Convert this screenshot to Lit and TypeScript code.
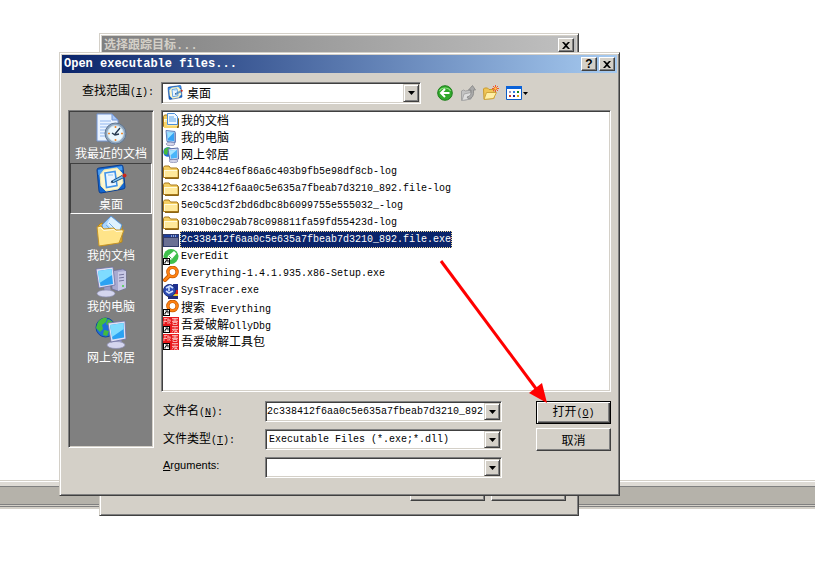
import { LitElement, html, svg, css, nothing } from "lit";
import { customElement, state } from "lit/decorators.js";

/* Splits a string so that Han runs get the 12px face and the rest the 10px monospace one. */
const mix = (text: string) =>
  text
    .split(/([\u4e00-\u9fff]+)/)
    .filter(Boolean)
    .map((run) => (/[\u4e00-\u9fff]/.test(run) ? html`<span class="han">${run}</span>` : run));

const shortcut = svg`<path d="M0 9h7v7h-7z" fill="#000"/><path d="M1 10h5v5h-5z" fill="#fff"/><path d="M2 14.500V13l2-1.500M2.500 11h2.500v2.500" fill="none" stroke="#000"/>`;

const monitor = svg`
  <path d="M17 5l11-2 3 2v17l-8 3-6-2z" fill="#a9aad0" stroke="#6c6c9c" stroke-width=".7"/>
  <path d="M23 6l8-1v17l-8 3z" fill="#c9c9e6"/>
  <path d="M24 9l5-.7M24 12l5-.7M24 15l5-.7" stroke="#77779f"/>
  <circle cx="28" cy="20" r="1" fill="#46d046"/>
  <path d="M9 21l6-1 1 6-6 1z" fill="#9a9cc8"/>
  <ellipse cx="11" cy="27.500" rx="9" ry="3.500" fill="#d4d5ee" stroke="#8d8fb5" stroke-width=".7"/>
  <path d="M1 3l17-2 2 18-16 3z" fill="#dfe0f4" stroke="#6d70a2" stroke-width=".8"/>
  <path d="M3 5l13.500-2 1.500 15-12.500 2z" fill="#2ba2f3"/>
  <path d="M3 5l13.500-2 .6 6-12.600 8z" fill="#7fdcff"/>`;

const folder = svg`
  <path d="M.5 3.500l1-1.500h4.500l1.500 2h6.500l1 1v8.500h-14.500z" fill="#f4cf63" stroke="#a8791b"/>
  <path d="M1 6h13.500v7h-13.500z" fill="#ffe99b"/>
  <path d="M1 6.500h13M1.500 6v7" stroke="#fffbdc"/>
  <path d="M2 14.500h13.500v-9" fill="none" stroke="#8a6415"/>`;

const deskPad = svg`
  <path d="M2 6q0-2 2-2l22-3q2 0 2 2l2 20q0 2-2 2l-22 4q-2 0-2-2z" fill="#1467cf" stroke="#0b3f92"/>
  <path d="M3 6l24-4 .4 4-24 5z" fill="#4b9ff3"/>
  <path d="M9 6l13-2 5 5 1 10-5 6-12 2-5-5-1-11z" fill="#fdf7d0" stroke="#f3e6a8"/>
  <path d="M10 9l10-1.500 2 14-10.500 2z" fill="#eaf5ff" stroke="#3f93ea" stroke-width="1.600"/>
  <path d="M13 11h5M20 14l.500 4-4 1" fill="none" stroke="#8fc8f6"/>
  <path d="M16 17.500l11-6 2 2-10.500 5z" fill="#7cc0f0" stroke="#174a80" stroke-width=".9"/>
  <path d="M15.500 18.500l2-1.500 1 1.500z" fill="#0d2540"/>
  <circle cx="29.500" cy="11.500" r="2" fill="#c9281c"/>`;

const sealMarks = "M1 1.500h3M2 1.500v3M1 4.500h3M1 4v3M5 1v6M4.500 3h3M7 3v2M6 5l1.500 2";

const drawings: Record<string, { box: number; art: unknown }> = {
  recent: {
    box: 32,
    art: svg`
      <path d="M2 1h15l6 6v21h-21z" fill="#eaf3ff" stroke="#7396d6"/>
      <path d="M17 1v6h6z" fill="#a9c8f6" stroke="#7396d6"/>
      <path d="M5 8h11M5 11h13M5 14h9M5 17h7M5 20h6M5 23h6" stroke="#91b7ee"/>
      <circle cx="20.500" cy="20.500" r="10.500" fill="#8fa5bd" stroke="#5f7690"/>
      <circle cx="20.500" cy="20.500" r="8" fill="#e9f7fd" stroke="#c5dbe9"/>
      <path d="M20.500 13v2M20.500 26v2M13 20.500h2M26 20.500h2" stroke="#f08a32" stroke-width="1.600"/>
      <path d="M25 15l-5 6M17 20l3 2 4-1" fill="none" stroke="#24384e" stroke-width="1.400"/>`,
  },
  desktop: { box: 32, art: deskPad },
  documents: {
    box: 32,
    art: svg`
      <path d="M3 11l3-3 6 2 2 2 13-2v17l-21 4z" fill="#e8b73a" stroke="#b58418"/>
      <path d="M7 10l9-9 11 9-5 14-12 2z" fill="#a9d5fb" stroke="#5d94d2"/>
      <path d="M16 2l10 8-3 9-11-10z" fill="#dff2ff"/>
      <path d="M11 10l7 7M14 8l7 7" stroke="#72ade6"/>
      <path d="M2 12l4-1 3 3 10-1 2 2h8l-5 13-20 3z" fill="#ffe489" stroke="#c4942a"/>
      <path d="M3.500 13l2-.500 3 3 10.500-1 2 2 6-.500" fill="none" stroke="#fffbe0"/>`,
  },
  computer: { box: 32, art: monitor },
  network: {
    box: 32,
    art: svg`
      <circle cx="10.500" cy="10.500" r="9.500" fill="#1f6ed8" stroke="#124a9d"/>
      <path d="M3 5q4-5 9-4l-1 4-4 3 1 4-3 3-4-4zM13 2l5 3-4 4-3-2zM9 13l5 1-2 5-4-1z" fill="#45bb3c"/>
      <g transform="translate(12 3)">
        <path d="M8 19l6-1 1 6-6 1z" fill="#9a9cc8"/>
        <ellipse cx="9" cy="25" rx="9" ry="3.500" fill="#d4d5ee" stroke="#8d8fb5" stroke-width=".7"/>
        <path d="M1 3l17-2 1 18-15 3z" fill="#dfe0f4" stroke="#6d70a2" stroke-width=".8"/>
        <path d="M3 5l13.500-2 .6 14.500-11.600 2z" fill="#2ba2f3"/>
        <path d="M3 5l13.500-2 .2 6-11.700 8z" fill="#7fdcff"/>
      </g>`,
  },
  folder: { box: 16, art: folder },
  docs16: {
    box: 16,
    art: svg`${folder}
      <path d="M4.500 .5h7l3 3v8h-10z" fill="#f2f9ff" stroke="#4d8fd8"/>
      <path d="M6 4h5M6 6h7M6 8h7" stroke="#58a5ec"/>
      <path d="M1 9h3v4h10v2h-13z" fill="#f8d66c"/>`,
  },
  pc16: {
    box: 16,
    art: svg`
      <path d="M3 .5l9 1v11l-8-1z" fill="#bcd9f8" stroke="#5b80bd"/>
      <path d="M4 2l7 .5v8.500l-6-.5z" fill="#35a3f5"/><path d="M4 2l7 .5-6 6z" fill="#9be2ff"/>
      <path d="M12 2l1 1v9l-1 1z" fill="#7a85b5"/>
      <ellipse cx="7.500" cy="14" rx="4.500" ry="1.700" fill="#d4d6ea" stroke="#8387ad" stroke-width=".7"/>`,
  },
  net16: {
    box: 16,
    art: svg`
      <circle cx="5" cy="5" r="4.800" fill="#1f6ed8"/><path d="M1 3q3-4 6-2l-2 3-1 4-3-1z" fill="#45bb3c"/>
      <path d="M5 2l10-1 .5 11-8.500 1z" fill="#dfe0f4" stroke="#5b6ea8"/>
      <path d="M6.500 3.500l7.500-.8 .4 8-6.400 1z" fill="#49b5fa"/><path d="M6.500 3.500l7.500-.8-7 6z" fill="#a5e4ff"/>
      <ellipse cx="10.500" cy="14" rx="4.500" ry="1.600" fill="#d4d6ea" stroke="#8387ad" stroke-width=".7"/>`,
  },
  exe: {
    box: 16,
    art: svg`<path d="M0 2h16v13h-16z" fill="#303a6a"/><path d="M1 6h14v8h-14z" fill="#6a7093"/>
      <path d="M1 3h14v2h-14z" fill="#1c3f9c"/><path d="M8 4h1M10 4h1M12 4h1" stroke="#fff"/>`,
  },
  everedit: {
    box: 16,
    art: svg`<circle cx="8" cy="7.500" r="7.500" fill="#3fc04c"/>
      <path d="M4 11l1-4 6-5 2.500 2.500-5 6z" fill="#fff"/><path d="M6 7l2.500 2.500" stroke="#3fc04c"/>${shortcut}`,
  },
  lens: {
    box: 16,
    art: svg`<path d="M6.500 9.500l-4.500 4.500" stroke="#c65a00" stroke-width="4" stroke-linecap="round"/>
      <circle cx="9.500" cy="6" r="4.600" fill="#fff" stroke="#c65a00" stroke-width="3.400"/>
      <circle cx="9.500" cy="6" r="4.600" fill="none" stroke="#ff8212" stroke-width="2"/>
      <path d="M6.500 9.500l-4.500 4.500" stroke="#ff8212" stroke-width="2.400" stroke-linecap="round"/>`,
  },
  lenscut: {
    box: 16,
    art: svg`<circle cx="9.500" cy="6" r="4.600" fill="#fff" stroke="#c65a00" stroke-width="3.400"/>
      <circle cx="9.500" cy="6" r="4.600" fill="none" stroke="#ff8212" stroke-width="2"/>${shortcut}`,
  },
  tracer: {
    box: 16,
    art: svg`<path d="M6 2h9v12h-9z" fill="#d8231f"/><path d="M10 1h5v6h-5z" fill="#1d2f8e"/>
      <path d="M4 11h11v3h-11z" fill="#f5c92c"/><path d="M5 13h10v3h-10z" fill="#222b78"/>
      <circle cx="6.500" cy="7.500" r="6" fill="#2c4bb3" stroke="#182d77"/>
      <path d="M3 5l4-2 3 2M3 8l3 2 4-2M6 4v4" fill="none" stroke="#cfe0ff" stroke-width="1.600"/>`,
  },
  seal: {
    box: 16,
    art: svg`<path d="M0 0h16v16h-16z" fill="#e8191c"/>
      <g fill="none" stroke="#ffc9c9" stroke-width=".8">
        <path d="${sealMarks}"/>
        <path d="M9 1.500h6M12 1v3M9.500 3h5M9 4.500h6M10 5.500h4v2h-4z"/>
        <path d="M9 9.500h6M10 10.500v1M12 10v2M14 10.500v1M9 12.500h6M11 12.500l-2 3M11 14h3l-3 1.500M12 14l3 1.500"/>
      </g>${shortcut}`,
  },
  back: {
    box: 16,
    art: svg`<circle cx="8" cy="8" r="7.300" fill="#2fa82b" stroke="#1d7f1b"/>
      <path d="M2.500 6a6 5 0 0 1 11 0" fill="none" stroke="#8be07f" stroke-width="1.200"/>
      <path d="M12.500 8h-8M8 4l-4 4 4 4" fill="none" stroke="#fff" stroke-width="2"/>`,
  },
  up: {
    box: 16,
    art: svg`<path d="M1.500 6l2-1 2 1 5-1v9l-9 1.500z" fill="#c3c3c3" stroke="#a2a2a2"/>
      <path d="M4 9l9-2-2 7-9 1.500z" fill="#dedede" stroke="#a8a8a8"/>
      <path d="M7 12q5-1 4-7h-2.500l4-4.500 3 4.500h-2q1 8-5 9z" fill="#a9a9a9" stroke="#858585" stroke-width=".8"/>`,
  },
  newdir: {
    box: 16,
    art: svg`<path d="M.5 4l1-1h3l1.500 1.500h5v9l-10 .5z" fill="#f0c556" stroke="#c89a2e"/>
      <path d="M3.500 7.500h10l-3 6-9.500 1z" fill="#ffefa5" stroke="#d0a53a"/>
      <path d="M12.500 0v7M9 3.500h7M10 1l5 5M15 1l-5 5" stroke="#f2562b"/><circle cx="12.500" cy="3.500" r="1.200" fill="#ffd24a"/>`,
  },
  views: {
    box: 16,
    art: svg`<path d="M.5 1.500h15v13h-15z" fill="#fff" stroke="#0a5bc8"/><path d="M0 1h16v3h-16z" fill="#0a62d8"/>
      <path d="M3 6h2v2h-2z" fill="#9c9cc4"/><path d="M7 6h2v2h-2z" fill="#2f7fe0"/><path d="M11 6h2v2h-2z" fill="#128a20"/>
      <path d="M3 10h2v2h-2z" fill="#d03a2a"/><path d="M7 10h2v2h-2z" fill="#15208c"/><path d="M11 10h2v2h-2z" fill="#d8a512"/>`,
  },
};

const icon = (name: string, cls = "i16") => {
  const d = drawings[name];
  return html`<svg class=${cls} viewBox="0 0 ${d.box} ${d.box}" aria-hidden="true">${d.art}</svg>`;
};

const arrowDown = html`<svg class="caret" viewBox="0 0 7 4" aria-hidden="true"><path d="M0 0h7l-3.500 4z" /></svg>`;
const cross = html`<svg class="glyph" viewBox="0 0 8 7" aria-hidden="true"><path d="M0 0h2l2 2 2-2h2l-3 3.500 3 3.500h-2l-2-2-2 2h-2l3-3.500z" /></svg>`;

const places = [
  ["recent", "我最近的文档"],
  ["desktop", "桌面"],
  ["documents", "我的文档"],
  ["computer", "我的电脑"],
  ["network", "网上邻居"],
];

const files = [
  ["docs16", "我的文档"],
  ["pc16", "我的电脑"],
  ["net16", "网上邻居"],
  ["folder", "0b244c84e6f86a6c403b9fb5e98df8cb-log"],
  ["folder", "2c338412f6aa0c5e635a7fbeab7d3210_892.file-log"],
  ["folder", "5e0c5cd3f2bd6dbc8b6099755e555032_-log"],
  ["folder", "0310b0c29ab78c098811fa59fd55423d-log"],
  ["exe", "2c338412f6aa0c5e635a7fbeab7d3210_892.file.exe"],
  ["everedit", "EverEdit"],
  ["lens", "Everything-1.4.1.935.x86-Setup.exe"],
  ["tracer", "SysTracer.exe"],
  ["lenscut", "搜索 Everything"],
  ["seal", "吾爱破解OllyDbg"],
  ["seal", "吾爱破解工具包"],
];

@customElement("app-root")
export class AppRoot extends LitElement {
  @state() private place = 1;
  @state() private chosen = 7;

  static styles = css`
    :host {
      display: block;
      position: relative;
      min-height: 100vh;
      overflow: hidden;
      background: #fff;
      color: #000;
      font: 10px/16px "Liberation Mono", "Noto Sans CJK SC", monospace;
    }
    * { box-sizing: border-box; }
    button, input, select {
      margin: 0;
      padding: 0;
      border: 0;
      border-radius: 0;
      background: none;
      color: inherit;
      font: inherit;
      appearance: none;
      outline: none;
    }
    .han {
      font-family: "Noto Sans CJK SC", sans-serif;
      font-size: 12px;
      line-height: 16px;
    }
    .i16 { width: 16px; height: 16px; flex: none; display: block; }
    .i32 { width: 32px; height: 32px; flex: none; display: block; }
    .caret { width: 7px; height: 4px; display: block; }
    .glyph { width: 8px; height: 7px; display: block; }

    .strip {
      position: absolute;
      top: 480px;
      left: 0;
      right: 0;
      border-top: 1px solid #d4d0c8;
      border-bottom: 2px solid #d4d0c8;
      padding-top: 1px;
    }
    .strip-light { height: 4px; background: #dedbd5; }
    .strip-bar { height: 19px; background: #b5b2aa; border-top: 1px solid #808080; border-bottom: 1px solid #808080; }
    .strip-line { height: 2px; background: #d4d0c8; border-bottom: 1px solid #808080; }

    .window {
      position: absolute;
      background: #d4d0c8;
      padding: 2px;
      border: 1px solid;
      border-color: #d4d0c8 #404040 #404040 #d4d0c8;
      box-shadow: inset 1px 1px #fff, inset -1px -1px #808080;
    }
    .rear { top: 33px; left: 99px; right: 236px; }
    .front { top: 52px; left: 59px; right: 195px; }
    .titlebar {
      display: flex;
      align-items: center;
      gap: 2px;
      height: 18px;
      padding: 0 2px;
      background: linear-gradient(to right, #0a246a, #a6caf0);
      color: #fff;
    }
    .rear .titlebar { background: linear-gradient(to right, #808080, #c0c0c0); color: #d4d0c8; }
    .titlebar h1 {
      flex: 1;
      margin: 0;
      font-size: 12px;
      line-height: 18px;
      font-weight: bold;
      white-space: nowrap;
    }
    .titlebar button { width: 16px; height: 14px; font: bold 12px/12px "Liberation Sans", sans-serif; color: #000; }
    .rear-body { display: flex; justify-content: flex-end; gap: 6px; padding: 424px 10px 12px; }

    .raised {
      display: flex;
      align-items: center;
      justify-content: center;
      background: #d4d0c8;
      border: 1px solid;
      border-color: #fff #404040 #404040 #fff;
      box-shadow: inset -1px -1px #808080;
    }
    .push { width: 75px; height: 23px; }
    .default { border-color: #000; box-shadow: inset 1px 1px #fff, inset -1px -1px #404040, inset -2px -2px #808080; }

    .body {
      display: grid;
      grid-template-columns: 86px 1fr;
      column-gap: 7px;
      padding: 9px 6px 15px;
    }
    .look-label { text-align: right; line-height: 18px; }
    .look { display: flex; align-items: flex-start; margin-bottom: 6px; }
    .look .combo { flex: 1; height: 22px; }
    .tools { display: flex; gap: 7px; width: 190px; padding: 3px 0 0 16px; }
    .tools button { display: flex; align-items: center; gap: 1px; }
    .tools .caret { width: 5px; height: 3px; }

    .sunken {
      background: #fff;
      border: 1px solid;
      border-color: #808080 #fff #fff #808080;
      box-shadow: inset 1px 1px #404040, inset -1px -1px #d4d0c8;
      padding: 1px;
    }
    .combo { display: flex; align-items: stretch; height: 21px; position: relative; min-width: 0; }
    .combo input, .combo select { flex: 1; min-width: 0; width: 100%; line-height: 16px; }
    .combo select { padding: 0 18px 0 2px; }
    .combo .i16 { margin: 1px 3px 0 4px; }
    .combo .big { font: 12px/18px "Noto Sans CJK SC", sans-serif; padding-left: 1px; }
    .drop {
      width: 16px;
      flex: none;
      border-color: #d4d0c8 #404040 #404040 #d4d0c8;
      box-shadow: inset 1px 1px #fff, inset -1px -1px #808080;
    }
    span.drop { position: absolute; top: 1px; bottom: 1px; right: 1px; pointer-events: none; }

    .places { grid-row: 2 / span 2; align-self: start; min-height: 338px; background: #808080; }
    .places button {
      display: flex;
      flex-direction: column;
      align-items: center;
      width: 100%;
      height: 51px;
      border: 1px solid transparent;
      color: #fff;
    }
    .places .current { border-color: #404040 #fff #fff #404040; }

    .list { margin: 0; min-height: 282px; list-style: none; }
    .list li { display: flex; gap: 1px; height: 17px; align-items: center; white-space: nowrap; }
    .name { padding: 0 1px; line-height: 17px; height: 17px; }
    .name .han { line-height: 15px; }
    .picked .name { background: #0a246a; color: #fff; outline: 1px dotted #f5db95; outline-offset: -1px; }

    .form { display: flex; gap: 34px; margin-top: 9px; }
    .fields { flex: 1; display: grid; grid-template-columns: 102px 1fr; row-gap: 7px; padding-left: 2px; align-items: center; }
    .plain { font: 11px/16px "Liberation Sans", sans-serif; align-self: start; }
    .actions { display: flex; flex-direction: column; gap: 4px; }

    .pointer { position: absolute; top: 205px; right: 70px; width: 112px; height: 146px; pointer-events: none; }
  `;

  render() {
    return html`
      <div class="strip">
        <div class="strip-light"></div>
        <div class="strip-bar"></div>
        <div class="strip-line"></div>
      </div>

      <section class="window rear">
        <header class="titlebar">
          <h1>${mix("选择跟踪目标...")}</h1>
          <button class="raised" aria-label="关闭">${cross}</button>
        </header>
        <div class="rear-body">
          <button class="raised push" aria-label="确定"></button>
          <button class="raised push" aria-label="取消"></button>
        </div>
      </section>

      <section class="window front" role="dialog" aria-labelledby="title">
        <header class="titlebar">
          <h1 id="title">Open executable files...</h1>
          <button class="raised">?</button>
          <button class="raised" aria-label="关闭">${cross}</button>
        </header>
        <div class="body">
          <label class="look-label" for="look">${mix("查找范围")}(<u>I</u>):</label>
          <div class="look">
            <div class="combo sunken">
              ${icon("desktop")}
              <select id="look" class="big"><option>桌面</option></select>
              <span class="raised drop">${arrowDown}</span>
            </div>
            <div class="tools">
              <button aria-label="后退">${icon("back")}</button>
              <button aria-label="向上">${icon("up")}</button>
              <button aria-label="新建文件夹">${icon("newdir")}</button>
              <button aria-label="查看">${icon("views")}${arrowDown}</button>
            </div>
          </div>

          <nav class="places sunken">
            ${places.map(
              ([art, name], i) => html`<button class=${i === this.place ? "current" : nothing} @click=${() => (this.place = i)}>
                ${icon(art, "i32")}${mix(name)}
              </button>`
            )}
          </nav>

          <ul class="list sunken" role="listbox" aria-label="文件">
            ${files.map(
              ([art, name], i) => html`<li
                role="option"
                aria-selected=${i === this.chosen}
                class=${i === this.chosen ? "picked" : nothing}
                @click=${() => (this.chosen = i)}
              >${icon(art)}<span class="name">${mix(name)}</span></li>`
            )}
          </ul>

          <div class="form">
            <div class="fields">
              <label for="file">${mix("文件名")}(<u>N</u>):</label>
              <div class="combo sunken">
                <input id="file" value="2c338412f6aa0c5e635a7fbeab7d3210_892" />
                <button class="raised drop" aria-label="文件名列表">${arrowDown}</button>
              </div>
              <label for="type">${mix("文件类型")}(<u>T</u>):</label>
              <div class="combo sunken">
                <select id="type"><option>Executable Files (*.exe;*.dll)</option></select>
                <span class="raised drop">${arrowDown}</span>
              </div>
              <label class="plain" for="args"><u>A</u>rguments:</label>
              <div class="combo sunken">
                <input id="args" />
                <button class="raised drop" aria-label="Arguments">${arrowDown}</button>
              </div>
            </div>
            <div class="actions">
              <button class="raised push default"><span>${mix("打开")}(<u>O</u>)</span></button>
              <button class="raised push">${mix("取消")}</button>
            </div>
          </div>
        </div>

        <svg class="pointer" viewBox="0 0 112 146" aria-hidden="true">
          <path d="M4 3l96 129" stroke="#f00" stroke-width="3" />
          <path d="M110 145l-18-10 13-10z" fill="#f00" />
        </svg>
      </section>
    `;
  }
}
